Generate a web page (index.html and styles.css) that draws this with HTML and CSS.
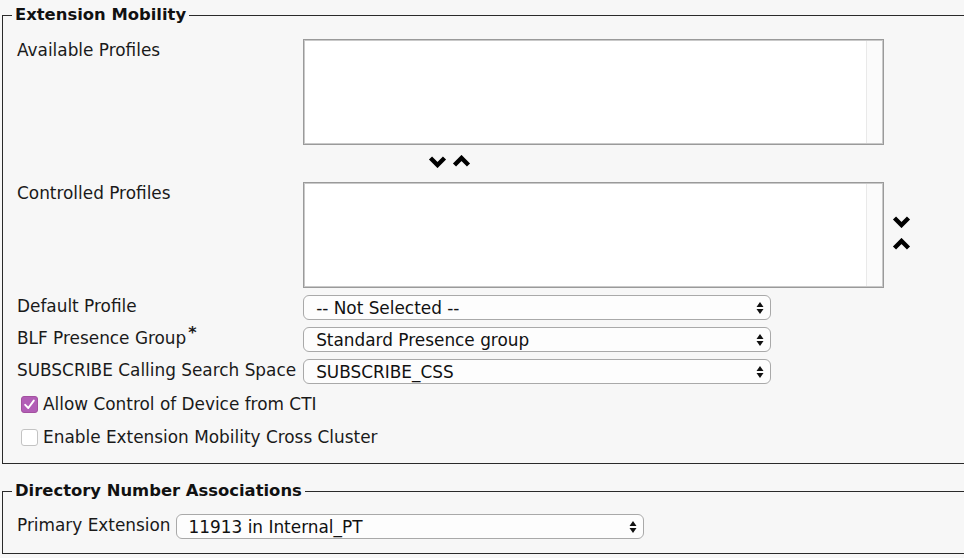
FILE: index.html
```html
<!DOCTYPE html>
<html lang="en">
<head>
<meta charset="utf-8">
<title>Extension Mobility</title>
<link rel="stylesheet" href="styles.css">
</head>
<body>
<fieldset class="group group-em">
  <legend class="group-title">Extension Mobility</legend>
  <div class="group-body">
    <div class="form-grid">
      <div class="label">Available Profiles</div>
      <div class="listbox"><div class="track"></div></div>
      <div></div>

      <div></div>
      <div class="move-arrows">
        <svg class="chev" viewBox="0 0 19 13" width="19" height="13"><polyline points="2.5,3 9.5,10 16.5,3"/></svg>
        <svg class="chev" viewBox="0 0 19 13" width="19" height="13"><polyline points="2.5,10 9.5,3 16.5,10"/></svg>
      </div>
      <div></div>

      <div class="label">Controlled Profiles</div>
      <div class="listbox"><div class="track"></div></div>
      <div class="order-arrows">
        <svg class="chev" viewBox="0 0 19 13" width="19" height="13"><polyline points="2.5,3 9.5,10 16.5,3"/></svg>
        <svg class="chev" viewBox="0 0 19 13" width="19" height="13"><polyline points="2.5,10 9.5,3 16.5,10"/></svg>
      </div>

      <div class="label">Default Profile</div>
      <div class="select"><span class="select-text">-- Not Selected --</span><svg class="updown" viewBox="0 0 8 14" width="8" height="14"><path d="M4 1 L7.5 6 L0.5 6 Z M4 13 L7.5 8 L0.5 8 Z"/></svg></div>
      <div></div>

      <div class="label">BLF Presence Group<sup class="req">*</sup></div>
      <div class="select"><span class="select-text">Standard Presence group</span><svg class="updown" viewBox="0 0 8 14" width="8" height="14"><path d="M4 1 L7.5 6 L0.5 6 Z M4 13 L7.5 8 L0.5 8 Z"/></svg></div>
      <div></div>

      <div class="label">SUBSCRIBE Calling Search Space</div>
      <div class="select"><span class="select-text">SUBSCRIBE_CSS</span><svg class="updown" viewBox="0 0 8 14" width="8" height="14"><path d="M4 1 L7.5 6 L0.5 6 Z M4 13 L7.5 8 L0.5 8 Z"/></svg></div>
      <div></div>
    </div>

    <div class="checks">
      <div class="check">
        <span class="box box-on"><svg viewBox="0 0 17 17" width="17" height="17"><polyline points="4.2,8.8 7.3,12 12.8,4.6"/></svg></span>
        <span>Allow Control of Device from CTI</span>
      </div>
      <div class="check">
        <span class="box"></span>
        <span>Enable Extension Mobility Cross Cluster</span>
      </div>
    </div>
  </div>
</fieldset>

<fieldset class="group group-dn">
  <legend class="group-title">Directory Number Associations</legend>
  <div class="group-body">
    <div class="inline-row">
      <div class="label">Primary Extension</div>
      <div class="select"><span class="select-text">11913 in Internal_PT</span><svg class="updown" viewBox="0 0 8 14" width="8" height="14"><path d="M4 1 L7.5 6 L0.5 6 Z M4 13 L7.5 8 L0.5 8 Z"/></svg></div>
    </div>
  </div>
</fieldset>
</body>
</html>
```

FILE: styles.css
```css
body {
  margin: 0;
  background: #f7f7f7;
  color: #1a1a1a;
  font-family: "DejaVu Sans", Verdana, sans-serif;
  font-size: 16.9px;
  line-height: 20px;
}

.group {
  margin: 5px 0 0 2px;
  border: 1px solid #2a2a2a;
  border-right-width: 0;
  padding: 14px 0 14px 9px;
  min-width: 0;
}

.group-dn {
  margin-top: 17px;
  padding-top: 13px;
  padding-bottom: 14px;
}

.group-title {
  font-weight: bold;
  font-size: 16.4px;
  padding: 0 3px;
  line-height: 20px;
  color: #111;
}

.group-body {
  padding-left: 5px;
}

.form-grid {
  display: grid;
  grid-template-columns: max-content 581px max-content;
  column-gap: 7px;
  row-gap: 7px;
  align-items: start;
}

.label {
  white-space: nowrap;
  line-height: 20px;
  padding-top: 1px;
}

.req {
  font-size: 16px;
  font-weight: bold;
  line-height: 0;
  vertical-align: 6px;
  margin-left: 2px;
}

.listbox {
  height: 106px;
  box-sizing: border-box;
  background: #fff;
  border: 1px solid #9a9a9a;
  box-shadow: inset 0 0 0 1px #c9c9c9;
  display: flex;
  justify-content: flex-end;
  padding: 1px;
}

.track {
  width: 15px;
  border-left: 1px solid #e9e9e9;
  background: #fbfbfb;
}

.move-arrows {
  height: 23px;
  display: flex;
  gap: 5px;
  padding-left: 125px;
  padding-top: 3px;
  box-sizing: border-box;
}

.order-arrows {
  align-self: center;
  display: flex;
  flex-direction: column;
  gap: 10px;
  margin-left: 1px;
  padding-bottom: 4px;
}

.chev {
  display: block;
}

.chev polyline {
  fill: none;
  stroke: #000;
  stroke-width: 4.4;
  stroke-linejoin: miter;
  stroke-linecap: butt;
}

.select {
  width: 468px;
  height: 25px;
  box-sizing: border-box;
  border: 1px solid #a9a9a9;
  border-radius: 6px;
  background: #fdfdfd;
  display: flex;
  align-items: center;
  justify-content: space-between;
  padding: 0 6px 0 12px;
  color: #111;
}

.select-text {
  white-space: nowrap;
  line-height: 20px;
  padding-top: 1px;
}

.updown {
  display: block;
}

.updown path {
  fill: #111;
}

.checks {
  margin-top: 8px;
  margin-left: 4px;
  display: flex;
  flex-direction: column;
  gap: 9px;
}

.check {
  display: flex;
  align-items: center;
  gap: 5px;
  height: 24px;
}

.box {
  width: 17px;
  height: 17px;
  box-sizing: border-box;
  border: 1px solid #c3c3c3;
  border-radius: 3px;
  background: #fff;
  display: block;
  position: relative;
}

.box-on {
  background: #b25eb6;
  border-color: #a3519f;
}

.box-on svg {
  position: absolute;
  left: -1px;
  top: -1px;
}

.box-on polyline {
  fill: none;
  stroke: #fff;
  stroke-width: 1.9;
  stroke-linecap: round;
  stroke-linejoin: round;
}

.inline-row {
  display: flex;
  align-items: flex-start;
  gap: 5px;
}
```
